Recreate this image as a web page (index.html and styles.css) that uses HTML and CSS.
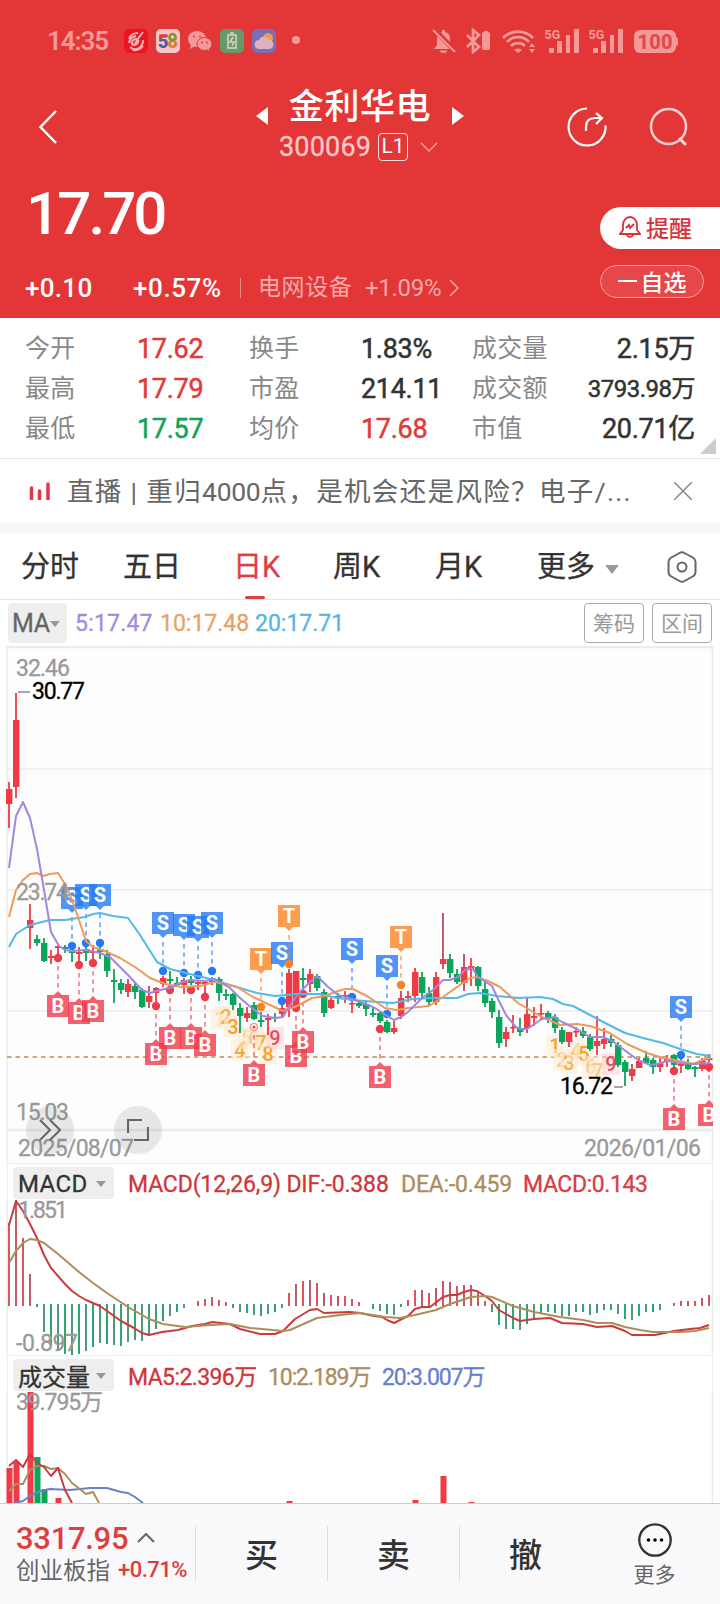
FILE: index.html
```
<!DOCTYPE html>
<html lang="zh-CN">
<head>
    <meta charset="UTF-8">
    <meta name="viewport" content="width=device-width, initial-scale=1.0">
    <title>金利华电 300069</title>
    <link rel="stylesheet" href="styles.css">
</head>
<body>
    <header>
        <div class="status">
            <span class="clock">14:35</span>
            <svg class="apps" width="182" height="26" viewBox="0 0 182 26">
                <rect x="1" y="1" width="24" height="24" rx="5" fill="#ee1320"/>
                <g fill="none" stroke="#f5b0b0" stroke-width="2">
                    <ellipse cx="12" cy="14" rx="3.500" ry="2.500" transform="rotate(-40 12 14)"/>
                    <path d="M20 4l-6 8q-1 4-4 5M15 5Q8 5 6 11M13 8q-6 1-7 7M7 19q4 4 9 1 4-2 4-8M10 22q6 1 10-4"/>
                </g>
                <rect x="33" y="1" width="24" height="24" rx="5" fill="#f7c5c6"/>
                <text class="n58" x="35" y="19.500"><tspan fill="#48609c">5</tspan><tspan fill="#dc7a32">8</tspan></text>
                <path d="M37.500 7.500h7M37.500 6.500v5" stroke="#e23a42" stroke-width="2.500"/>
                <circle cx="49.500" cy="9" r="3" fill="#f7c5c6" stroke="#7a9a30" stroke-width="2.500"/>
                <g fill="#f3999a">
                    <ellipse cx="74" cy="11" rx="9" ry="8"/>
                    <path d="M68 16l-1 5 5-3z"/>
                    <ellipse cx="81.500" cy="16" rx="7.500" ry="6.500" stroke="#e33637"/>
                    <path d="M84 20l2 3v-5z"/>
                </g>
                <g fill="#e33637">
                    <circle cx="71" cy="8.500" r="1"/><circle cx="77" cy="8.500" r="1"/>
                    <circle cx="79" cy="14.500" r="1"/><circle cx="84" cy="14.500" r="1"/>
                </g>
                <rect x="97" y="1" width="24" height="24" rx="5" fill="#659b68"/>
                <path d="M105 7h8v13h-8zM107 5h4M110 9l-3 5h4l-2 4" fill="none" stroke="#e0d3c4" stroke-width="1.500"/>
                <rect x="129" y="1" width="24" height="24" rx="5" fill="#786fb5"/>
                <circle cx="145" cy="10" r="5" fill="#ee9c48"/>
                <path d="M136 21a4.500 4.500 0 0 1 0-9 5.500 5.500 0 0 1 10 0 4.500 4.500 0 0 1 0 9z" fill="#dfb0bd"/>
                <circle cx="173" cy="12" r="4" fill="#f3999a"/>
            </svg>
            <svg class="signals" width="246" height="26" viewBox="432 28 246 26">
                <g fill="#f3999a">
                    <path d="M434 49h19l-3-4v-6a7 7 0 0 0-5-7v-2h-3v2a7 7 0 0 0-5 7v6zM440 50.500h7a3.500 2.500 0 0 1-7 0z"/>
                    <path d="M434 29l22 23" stroke="#e33637" stroke-width="5"/>
                    <path d="M433 30l22 22" stroke="#f3999a" stroke-width="2"/>
                    <rect x="482" y="32" width="8" height="18" rx="2"/><rect x="484" y="31" width="4" height="3"/>
                    <path d="M518 53l-4-3a6 6 0 0 1 8 0zM529 47h6l-3-4zM529 49h6l-3 4z"/>
                    <path d="M549 48h5v5h-5zM557 41h5v12h-5zM566 35h4v18h-4zM574 29h5v24h-5zM593 48h5v5h-5zM601 41h5v12h-5zM610 35h4v18h-4zM618 29h5v24h-5z"/>
                    <rect x="634" y="30" width="42" height="23" rx="6"/><path d="M676 37q2 0 2 3v3q0 3-2 3z"/>
                </g>
                <path d="M467 35l12 12-6 5V30l6 5-12 12M503 38a21 21 0 0 1 30 0M507 42a15 15 0 0 1 22 0M511 46a10 10 0 0 1 14 0" fill="none" stroke="#f3999a" stroke-width="2.700"/>
                <text class="net" x="544.500" y="38.500">5G</text>
                <text class="net" x="588.500" y="38.500">5G</text>
                <text class="battery" x="637.500" y="48.500" textLength="35">100</text>
            </svg>
        </div>
        <nav>
            <svg class="back" width="24" height="36" viewBox="0 0 24 36"><path d="M20 2L4.500 18 20 34"/></svg>
            <div class="name">
                <div class="title">
                    <svg width="12" height="18"><path d="M12 0v18L0 9z" fill="#fff"/></svg>
                    <h1>金利华电</h1>
                    <svg width="12" height="18"><path d="M0 0v18l12-9z" fill="#fff"/></svg>
                </div>
                <div class="code">
                    <span>300069</span><b>L1</b>
                    <svg width="18" height="10"><path d="M1 1l8 8 8-8" fill="none" stroke="#f3999a" stroke-width="1.500"/></svg>
                </div>
            </div>
            <svg class="tools" width="124" height="42" viewBox="566 106 124 42">
                <path d="M587 108.500a18.500 18.500 0 1 0 18.500 17" fill="none" stroke="#fff" stroke-width="2.200"/>
                <path d="M586 131v-4q0-9 9-9h7M596 113l6 5-6 6" fill="none" stroke="#fff" stroke-width="2.200"/>
                <circle cx="668.500" cy="126.500" r="17.500" fill="none" stroke="#f9d0d0" stroke-width="2.500"/>
                <path d="M679 138l7 7" stroke="#f9d0d0" stroke-width="3"/>
            </svg>
        </nav>
        <div class="price">
            <strong>17.70</strong>
            <span class="remind">
                <svg width="22" height="24" viewBox="0 0 22 24" fill="none" stroke="#d8333b" stroke-width="1.800"><path d="M1 19h20l-3-4V10a7 8 0 0 0-14 0v5zM7 19q4 6 8 0M7 13l3-3 1 3 4-4"/></svg>
                提醒
            </span>
        </div>
        <div class="change">
            <span class="diff">+0.10</span>
            <span class="pct">+0.57%</span>
            <span class="sector">电网设备</span>
            <span class="sector-pct">+1.09%</span>
            <svg width="10" height="18"><path d="M1 1l8 8-8 8" fill="none" stroke="#f3aaaa" stroke-width="1.500"/></svg>
            <span class="fav"><i></i>自选</span>
        </div>
    </header>

    <section class="quote">
        <span>今开</span><b class="red">17.62</b><span>换手</span><b>1.83%</b><span>成交量</span><b class="end">2.15万</b>
        <span>最高</span><b class="red">17.79</b><span>市盈</span><b>214.11</b><span>成交额</span><b class="end small">3793.98万</b>
        <span>最低</span><b class="green">17.57</b><span>均价</span><b class="red">17.68</b><span>市值</span><b class="end">20.71亿</b>
    </section>

    <section class="notice">
        <svg width="22" height="18"><path d="M2.500 17V6M10.500 17V9M19 17V2" stroke="#e13a42" stroke-width="3.500" stroke-linecap="round"/></svg>
        <p>直播 | 重归<em>4000</em>点，是机会还是风险？电子/...</p>
        <svg width="18" height="18"><path d="M0 0l18 18M18 0L0 18" stroke="#888" stroke-width="1.500"/></svg>
    </section>

    <div class="tabs">
        <span>分时</span>
        <span>五日</span>
        <span class="active">日K</span>
        <span>周K</span>
        <span>月K</span>
        <span>更多<i class="arrow"></i></span>
        <svg width="30" height="32" viewBox="0 0 30 32" fill="none" stroke="#666" stroke-width="2"><path d="M12.500 2q2.500-1.500 5 0l9 5q2 1.500 2 4v10q0 2.500-2 4l-9 5q-2.500 1.500-5 0l-9-5q-2-1.500-2-4V11q0-2.500 2-4z"/><circle cx="15" cy="16" r="4.500"/></svg>
    </div>

    <div class="ma-row">
        <span class="select">MA<i class="arrow"></i></span>
        <span class="ma5">5:17.47</span>
        <span class="ma10">10:17.48</span>
        <span class="ma20">20:17.71</span>
        <button>筹码</button>
        <button>区间</button>
    </div>

    <div class="kline">
        <svg id="kline" width="720" height="517" viewBox="0 646 720 517"></svg>
        <span class="round next"><svg width="22" height="22"><path d="M1 1l10 10L1 21M11 1l10 10-10 10" fill="none" stroke="#666" stroke-width="2"/></svg></span>
        <span class="round expand"><svg width="22" height="22"><path d="M1 14V1h14M7 21h14V8" fill="none" stroke="#666" stroke-width="2.200"/></svg></span>
    </div>

    <div class="panel-head">
        <span class="select">MACD<i class="arrow"></i></span>
        <span class="m-red">MACD(12,26,9) DIF:-0.388</span>
        <span class="m-gold">DEA:-0.459</span>
        <span class="m-red2">MACD:0.143</span>
    </div>
    <svg id="macd" width="720" height="155" viewBox="0 1200 720 155"></svg>

    <div class="panel-head vol">
        <span class="select">成交量<i class="arrow"></i></span>
        <span class="m-red">MA5:2.396万</span>
        <span class="m-gold">10:2.189万</span>
        <span class="m-blue">20:3.007万</span>
    </div>
    <svg id="volume" width="720" height="111" viewBox="0 1392 720 111"></svg>

    <footer>
        <div class="index">
            <div><strong>3317.95</strong><svg width="18" height="10"><path d="M1 9l8-8 8 8" fill="none" stroke="#666" stroke-width="2"/></svg></div>
            <div class="index-name">创业板指 <b>+0.71%</b></div>
        </div>
        <span class="action">买</span>
        <span class="action">卖</span>
        <span class="action">撤</span>
        <span class="more">
            <svg width="34" height="34"><circle cx="17" cy="17" r="15.700" fill="none" stroke="#333" stroke-width="2.300"/><circle cx="10.500" cy="17" r="1.800"/><circle cx="17" cy="17" r="1.800"/><circle cx="23.500" cy="17" r="1.800"/></svg>
            更多
        </span>
    </footer>
    <script src="chart.js"></script>
</body>
</html>
```
FILE: styles.css
```
* {
    box-sizing: border-box;
}
body {
    margin: 0;
    width: 720px;
    height: 1604px;
    overflow: hidden;
    background: #fff;
    color: #333;
    font-family: Roboto, "Noto Sans CJK SC", sans-serif;
}
svg {
    display: block;
    flex: none;
}
header {
    height: 318px;
    background: #e33637;
    color: #fff;
}
.status {
    display: flex;
    align-items: center;
    height: 82px;
    padding-left: 47px;
}
.clock {
    width: 76px;
    font-size: 26px;
    font-weight: 600;
    letter-spacing: -1.1px;
    color: #f3999a;
}
.signals {
    margin-left: 127px;
}
.n58 {
    font-size: 18px;
    font-weight: 900;
    letter-spacing: -1px;
}
.net {
    font-size: 12.5px;
    font-weight: 700;
    fill: #f3999a;
}
.battery {
    font-size: 20px;
    font-weight: 800;
    fill: #e04a4d;
}
nav {
    display: flex;
    align-items: center;
    height: 90px;
    padding: 0 30px 0 36px;
}
.back path {
    fill: none;
    stroke: #fff;
    stroke-width: 2.5;
}
.name {
    margin-left: 196px;
    width: 208px;
    margin-top: -2px;
}
.title {
    display: flex;
    align-items: center;
    justify-content: space-between;
    height: 42px;
}
.title svg {
    margin-top: 16px;
}
h1 {
    margin: 0;
    font-size: 35px;
    line-height: 42px;
    font-weight: 500;
    letter-spacing: 0.6px;
}
.code {
    display: flex;
    align-items: center;
    height: 36px;
    padding-left: 23px;
    font-size: 27px;
    color: #f9c8c8;
}
.code span {
    width: 99px;
    letter-spacing: 0.2px;
    -webkit-text-stroke: 0.3px;
}
.code b {
    width: 30px;
    height: 28px;
    margin-right: 12px;
    border: 1.5px solid #fbdede;
    border-radius: 4px;
    font-size: 21px;
    line-height: 25px;
    font-weight: 400;
    text-align: center;
    color: #fff;
}
.tools {
    margin-left: 102px;
}
.price {
    display: flex;
    align-items: center;
    justify-content: space-between;
    height: 86px;
    padding-left: 26px;
}
.price strong {
    margin-top: -4px;
    font-size: 60px;
    font-weight: 500;
    letter-spacing: -2.9px;
}
.remind {
    display: flex;
    align-items: center;
    gap: 5px;
    width: 120px;
    height: 42px;
    margin-top: 26px;
    padding: 0 0 2px 19px;
    border-radius: 21px 0 0 21px;
    background: #fff;
    color: #d8333b;
    font-size: 23px;
    font-weight: 500;
}
.change {
    display: flex;
    align-items: center;
    height: 60px;
    padding: 0 16px 0 25px;
    font-size: 26px;
}
.diff {
    width: 108px;
    font-weight: 500;
    letter-spacing: 0.3px;
}
.pct {
    width: 107px;
    font-weight: 500;
    letter-spacing: 0.6px;
}
.sector {
    width: 125px;
    padding-left: 17px;
    border-left: 1px solid #ee8585;
    font-size: 23px;
    line-height: 20px;
    letter-spacing: 0.6px;
    color: #f3aaaa;
}
.sector-pct {
    width: 84px;
    font-size: 24px;
    letter-spacing: -0.3px;
    color: #f3aaaa;
}
.fav {
    display: flex;
    align-items: center;
    justify-content: center;
    gap: 4px;
    width: 104px;
    height: 33px;
    margin: -13px 0 0 auto;
    padding-bottom: 2px;
    border: 1px solid #f2a0a0;
    border-radius: 17px;
    background: #e64748;
    font-size: 23px;
    font-weight: 500;
}
.fav i {
    width: 19px;
    height: 2px;
    background: #fff;
}
.quote {
    display: grid;
    grid-template-columns: 112px 112px 112px 111px 110px 113px;
    grid-template-rows: repeat(3, 40px);
    align-items: center;
    height: 141px;
    padding: 11px 0 0 25px;
    border-bottom: 1px solid #e5e5e5;
    position: relative;
}
.quote::after {
    content: "";
    position: absolute;
    right: 4px;
    bottom: 4px;
    border: 8px solid #ccc;
    border-left-color: transparent;
    border-top-color: transparent;
}
.quote span {
    font-size: 25px;
    line-height: 40px;
    letter-spacing: 0.3px;
    color: #888;
}
.quote b {
    font-size: 27px;
    line-height: 40px;
    font-weight: 400;
    letter-spacing: -0.3px;
    white-space: nowrap;
    -webkit-text-stroke: 0.5px;
}
.quote .end {
    text-align: right;
}
.quote .small {
    font-size: 24px;
    letter-spacing: -0.5px;
}
.quote .red {
    color: #df3b38;
}
.quote .green {
    color: #12a35a;
}
.notice {
    display: flex;
    align-items: center;
    height: 64px;
    padding-left: 29px;
}
.notice p {
    width: 607px;
    margin: -4px 0 0 16px;
    font-size: 26.5px;
    letter-spacing: 1.35px;
    white-space: nowrap;
    color: #666;
}
.notice em {
    font-style: normal;
    letter-spacing: -0.3px;
}
.tabs {
    display: flex;
    align-items: center;
    height: 77px;
    padding: 2px 0 0 21px;
    border-top: 10px solid #f7f7f7;
    border-bottom: 1px solid #e5e5e5;
    font-size: 29px;
}
.tabs span {
    position: relative;
    width: 102px;
    line-height: 60px;
    white-space: nowrap;
    -webkit-text-stroke: 0.3px;
}
.tabs span:nth-child(2) {
    width: 110px;
}
.tabs span:nth-child(3) {
    width: 100px;
}
.tabs span:nth-child(6) {
    width: 130px;
}
.tabs .active {
    color: #dd3f48;
}
.tabs .active::after {
    content: "";
    position: absolute;
    left: 12px;
    bottom: -2px;
    width: 20px;
    height: 3px;
    border-radius: 2px;
    background: #d8404a;
}
.arrow {
    display: inline-block;
    border: 5px solid transparent;
    border-top: 6px solid #999;
    border-bottom: 0;
    vertical-align: middle;
}
.tabs .arrow {
    margin-left: 10px;
    border-width: 9px 7px 0;
}
.ma-row {
    display: flex;
    align-items: center;
    height: 46px;
    padding: 0 8px;
    font-size: 23px;
}
.ma-row span {
    padding-top: 1px;
    -webkit-text-stroke: 0.3px;
}
.select {
    background: #eee;
    border-radius: 4px;
    color: #333;
}
.ma-row .select {
    width: 59px;
    height: 40px;
    margin-right: 8px;
    padding-left: 4px;
    font-size: 25px;
    line-height: 39px;
    letter-spacing: -0.4px;
    white-space: nowrap;
    color: #666;
}
.ma-row .arrow {
    margin-top: -3px;
}
.ma5 {
    width: 85px;
    letter-spacing: 0.2px;
    color: #a38bdc;
}
.ma10 {
    width: 95px;
    color: #eaa066;
}
.ma20 {
    flex: 1;
    color: #54b6e4;
}
.ma-row button {
    width: 60px;
    height: 40px;
    margin-left: 8px;
    padding: 0 0 3px;
    border: 1px solid #aaa;
    border-radius: 4px;
    background: #fff;
    color: #999;
    font: 21px Roboto, "Noto Sans CJK SC", sans-serif;
}
.kline {
    position: relative;
    height: 517px;
}
.round {
    position: absolute;
    top: 460px;
    display: flex;
    align-items: center;
    justify-content: center;
    width: 48px;
    height: 48px;
    border-radius: 50%;
    background: rgba(120, 120, 120, 0.16);
}
.next {
    left: 26px;
}
.expand {
    left: 114px;
}
.panel-head {
    display: flex;
    align-items: center;
    height: 37px;
    margin: 0 7px;
    padding: 2px 0 0 5px;
    border: 1px solid #eee;
    border-bottom: 0;
    font-size: 23px;
    white-space: nowrap;
}
.panel-head span {
    padding-top: 2px;
    -webkit-text-stroke: 0.3px;
}
.panel-head .select {
    display: flex;
    align-items: center;
    justify-content: space-between;
    width: 101px;
    height: 32px;
    margin-right: 14px;
    padding: 1px 8px 0 5px;
    font-size: 24px;
    letter-spacing: 0.4px;
}
.m-red, .m-red2 {
    color: #cf3539;
}
.m-red {
    width: 273px;
    letter-spacing: -0.15px;
}
.m-red2 {
    letter-spacing: -0.4px;
    color: #dc3a44;
}
.m-gold {
    width: 122px;
    letter-spacing: -0.2px;
    color: #ab8d5a;
}
.m-blue {
    color: #6580cc;
}
.vol .select {
    letter-spacing: 0;
}
.vol span {
    padding-top: 0;
}
.vol .m-red {
    width: 140px;
    letter-spacing: -0.6px;
}
.vol .m-gold {
    width: 114px;
}
.vol .m-gold, .vol .m-blue {
    letter-spacing: -1.1px;
}
footer {
    position: relative;
    display: flex;
    height: 101px;
    border-top: 1px solid #ccc;
    background: #f9f9fc;
}
.index {
    width: 195px;
    padding: 16px 0 0 16px;
    white-space: nowrap;
}
.index div {
    display: flex;
    align-items: center;
    height: 36px;
    gap: 9px;
}
.index strong {
    font-size: 31px;
    font-weight: 500;
    letter-spacing: -0.3px;
    color: #dd3f3d;
}
.index .index-name {
    gap: 8px;
    height: 26px;
    font-size: 23.5px;
    color: #666;
}
.index-name b {
    font-size: 22px;
    font-weight: 500;
    letter-spacing: -0.5px;
    color: #df3b38;
}
.action {
    width: 132px;
    height: 56px;
    margin-top: 22px;
    border-left: 1px solid #ddd;
    font-size: 33px;
    line-height: 60px;
    font-weight: 500;
    text-align: center;
}
.more {
    display: flex;
    flex-direction: column;
    align-items: center;
    flex: 1;
    margin: 19px 2px 0 0;
    font-size: 21px;
    line-height: 36px;
    color: #666;
}
#kline text, #macd text, #volume text {
    font-family: Roboto, "Noto Sans CJK SC", sans-serif;
}
#macd, #volume {
    overflow: visible;
}
```
FILE: chart.js
```
const NS = 'http://www.w3.org/2000/svg';
const RED = '#ef3b46', GREEN = '#09a65b';
const BARS = 101;
const x = i => 9 + i * 7;

function add(svg, name, attrs, text) {
    const el = document.createElementNS(NS, name);
    for (const k in attrs) el.setAttribute(k, attrs[k]);
    if (text) el.textContent = text;
    svg.appendChild(el);
    return el;
}
function line(svg, x1, y1, x2, y2, stroke, w, dash) {
    add(svg, 'line', { x1, y1, x2, y2, stroke, 'stroke-width': w, 'stroke-dasharray': dash || 'none' });
}
function curve(svg, points, stroke) {
    add(svg, 'polyline', { points, stroke, fill: 'none', 'stroke-width': 2, 'stroke-linejoin': 'round' });
}
function label(svg, lx, y, text, width, fill, size) {
    add(svg, 'text', { x: lx, y, fill, 'font-size': size || 23, textLength: width, stroke: fill, 'stroke-width': 0.3 }, text);
}

// candles: index, high, low, body top, body bottom, up
const candles = `0 782 828 789 804 1|1 693 798 720 787 1|3 904 949 920 928 1|4 935 946 939 943 0|5 938 962 943 961 0
6 950 964 956 958 1|7 945 960 946 948 1|8 945 953 947 949 0|9 948 962 951 953 0|10 947 963 952 954 1
11 946 961 949 953 0|12 945 960 951 953 1|13 945 959 949 952 0|14 950 977 954 971 0|15 969 1003 980 982 0
16 979 994 983 990 0|17 979 997 984 992 1|18 983 999 986 992 0|19 988 1008 990 1007 0|20 986 1008 996 1002 1
21 987 1005 988 993 1|22 976 987 978 984 1|23 971 986 979 981 0|24 977 987 983 985 0|25 978 994 980 985 1
26 976 985 981 983 0|27 980 990 982 984 1|28 982 994 982 984 1|29 977 985 980 982 1|30 977 1001 979 993 0
31 989 1000 994 996 0|32 993 1010 994 1005 0|33 1003 1033 1008 1016 0|34 1007 1022 1013 1018 1|35 1002 1020 1005 1019 0
36 1012 1027 1020 1022 0|37 1014 1035 1018 1020 1|38 1013 1022 1017 1018 0|39 1003 1018 1008 1014 1|40 969 1017 973 1007 1
41 971 1010 971 1007 1|42 968 995 978 980 0|43 969 992 974 984 1|44 974 991 976 988 0|45 989 1017 992 1013 0
46 998 1009 1000 1008 1|47 993 1004 996 998 0|48 991 1003 995 997 1|49 995 1013 1003 1004 1|50 1001 1008 1003 1006 0
51 1002 1016 1004 1009 0|52 1007 1017 1013 1015 0|53 1012 1023 1013 1021 0|54 1020 1033 1022 1032 0|55 1021 1034 1028 1032 1
56 991 1019 998 1016 1|57 991 1002 996 998 1|58 968 1002 972 996 1|59 972 998 977 993 0|60 987 1005 993 1002 0
61 972 1005 977 1002 1|62 913 969 959 964 1|63 954 978 959 973 0|64 969 984 974 982 0|65 954 991 967 983 1
66 958 986 966 970 1|67 966 991 967 986 0|68 982 1007 989 1003 0|69 998 1018 1001 1012 0|70 1010 1048 1017 1043 0
71 1027 1047 1032 1039 1|72 1015 1033 1027 1028 1|73 1018 1036 1028 1032 0|74 998 1033 1014 1028 1|75 1007 1026 1016 1018 1
76 1004 1020 1013 1014 1|77 1011 1023 1013 1019 0|78 1014 1033 1017 1028 0|79 1027 1044 1030 1042 0|80 1032 1047 1032 1042 1
81 1027 1037 1031 1032 1|82 1027 1038 1031 1036 0|83 1034 1051 1037 1049 0|84 1016 1055 1041 1046 1|85 1028 1049 1039 1044 1
86 1035 1047 1039 1043 0|87 1042 1067 1045 1065 0|88 1060 1086 1062 1072 0|89 1064 1081 1069 1076 1|90 1058 1068 1061 1068 1
91 1051 1064 1058 1063 0|92 1058 1074 1060 1067 0|93 1057 1072 1063 1067 1|94 1055 1067 1059 1061 1|95 1054 1067 1055 1065 0
96 1058 1073 1064 1066 1|97 1059 1070 1064 1069 0|98 1066 1077 1067 1069 0|99 1058 1071 1060 1069 1|100 1054 1072 1058 1060 1`;

const ma5 = '9,868 16,816 23,802 30,818 37,849 44,890 51,932 59,946 65,950 72,951 86,950 100,953 110,957 128,975 142,990 150,993 160,990 170,988 182,982 190,980 205,981 215,979 230,988 240,998 253,1009 263,1016 275,1018 283,1017 290,1005 300,992 310,982 317,976 327,986 338,995 352,999 363,1003 375,1008 387,1016 394,1020 401,1017 408,1012 422,998 433,990 443,980 450,980 458,977 465,970 472,968 478,977 492,986 498,999 506,1015 515,1026 520,1029 527,1029 542,1019 554,1017 562,1022 577,1029 590,1037 603,1037 612,1041 623,1049 638,1060 650,1065 657,1064 667,1061 680,1063 695,1064 710,1063';
const ma10 = '9,917 16,890 23,880 30,874 37,873 43,876 50,874 58,873 65,884 72,900 79,920 86,941 93,947 107,952 120,958 135,967 150,978 165,984 182,987 200,986 215,982 237,987 253,997 270,1005 283,1011 297,1006 312,998 325,996 335,992 345,989 353,989 367,996 385,1008 397,1010 408,1008 429,1006 443,997 457,987 470,978 477,977 488,981 500,987 518,1003 540,1016 560,1025 577,1024 590,1026 610,1033 627,1044 647,1053 663,1058 680,1061 693,1064 705,1059 711,1058';
const ma20 = '9,947 16,934 30,925 50,920 65,920 85,917 93,914 100,913 113,916 128,918 140,935 157,962 170,969 190,974 210,979 240,988 257,993 275,996 297,994 320,994 337,998 353,1000 377,1002 393,1003 413,999 433,998 457,998 468,994 480,993 497,996 518,998 540,997 553,999 563,1004 573,1006 590,1015 607,1024 625,1033 643,1038 663,1043 680,1049 697,1054 711,1056';

// trade flags: type, bar index, flag top, dot y
const flags = [
    ['S', 9, 887, 946], ['S', 11, 884, 943], ['S', 13, 884, 943],
    ['S', 22, 912, 971], ['S', 25, 914, 973], ['S', 27, 916, 975], ['S', 29, 912, 971],
    ['B', 7, 995, 958], ['B', 10, 1002, 965], ['B', 12, 1000, 963],
    ['B', 21, 1043, 1006], ['B', 23, 1027, 990], ['B', 26, 1027, 990], ['B', 28, 1034, 997],
    ['T', 36, 948, 1007], ['S', 39, 942, 1001], ['T', 40, 905, 964],
    ['B', 41, 1045, 1008], ['B', 42, 1031, 994],
    ['S', 49, 938, 997], ['S', 54, 955, 1014], ['T', 56, 926, 985], ['B', 53, 1066, 1029],
    ['S', 96, 996, 1055], ['B', 95, 1108, 1071], ['B', 100, 1104, 1067], ['B', 35, 1064, 1027]
];
const flagColor = { S: '#2479f5', B: '#ef3b4a', T: '#fb8325' };

// nine-turn counts: text, x, centre y, opacity
const counts = [
    [1, 220, 1019, 0.4], [2, 226, 1017, 0.8], [3, 233, 1027, 1], [4, 240, 1050, 0.9], [5, 247, 1038, 0.4],
    [6, 254, 1038, 0.4], [7, 261, 1043, 0.9], [8, 268, 1054, 1], [9, 275, 1038, 1],
    [1, 555, 1046, 1], [2, 562, 1060, 0.5], [3, 569, 1063, 0.8], [4, 576, 1051, 0.5], [5, 584, 1054, 1],
    [6, 591, 1067, 0.5], [7, 598, 1071, 0.5], [9, 611, 1064, 1]
];

const k = document.getElementById('kline');
add(k, 'rect', { x: 8, y: 648, width: 704, height: 515, fill: '#fdfdfd' });
[769, 890, 1011].forEach(y => line(k, 7, y, 712, y, '#f1f1f1', 2));
line(k, 7, 647, 712, 647, '#ebebeb', 2.5);
line(k, 7, 1130, 712, 1130, '#ebebeb', 2.5);
line(k, 7, 646, 7, 1163, '#ebebeb', 1.5);
line(k, 712.5, 646, 712.5, 1163, '#ebebeb', 1.5);
line(k, 7, 1057, 712, 1057, '#d0a878', 2, '4.500 4');

counts.forEach(([n, cx, cy, o]) => {
    const nine = n === 9;
    add(k, 'rect', { x: cx - 9, y: cy - 11, width: 18, height: 22, rx: 2, fill: nine ? '#ffcfd3' : '#fdebd3', opacity: 0.55 });
    add(k, 'text', { x: cx, y: cy + 7, 'text-anchor': 'middle', 'font-size': 20, 'font-weight': 500, fill: nine ? '#e54b58' : '#f5a12b', opacity: o }, n);
});

candles.split(/[|\n]/).forEach(row => {
    const [i, high, low, top, bottom, up] = row.split(' ').map(Number);
    const color = up ? RED : GREEN;
    line(k, x(i), high, x(i), low, up && i % 3 === 2 ? '#b64c5c' : color, 1.8);
    add(k, 'rect', { x: x(i) - 3, y: top, width: 6.4, height: Math.max(1.5, bottom - top), fill: color });
});

flags.forEach(([type, i, top, dot]) => {
    const cx = x(i), below = type === 'B', color = flagColor[type];
    const g = add(k, 'g', cx > 700 ? { 'clip-path': 'inset(0 7px 0 0)' } : {});
    const y1 = below ? dot + 8 : top + 30, y2 = below ? top - 5 : dot - 6;
    line(g, cx, y1, cx, y2, color, 1.8, '4.500 4');
    g.lastChild.setAttribute('opacity', 0.6);
    const tip = below ? `M${cx - 4} ${top}l4-4 4 4z` : `M${cx - 4} ${top + 22}l4 4 4-4z`;
    add(g, 'path', { d: `M${cx - 11} ${top}h22v22h-22z` + tip, fill: color, opacity: 0.8 });
    add(g, 'text', { x: cx, y: top + 18, 'text-anchor': 'middle', 'font-size': 20, 'font-weight': 700, fill: '#fff' }, type);
    if (i !== 35) add(k, 'circle', { cx, cy: dot, r: 4.2, fill: color });
});
add(k, 'circle', { cx: 254, cy: 1027, r: 3.5, fill: 'none', stroke: '#ef8a92', 'stroke-width': 1.2 });
add(k, 'circle', { cx: 254, cy: 1027, r: 1.5, fill: '#ef3b4a' });
curve(k, ma20, '#52b9e8');
curve(k, ma10, '#ec9b5c');
curve(k, ma5, '#a387de');

label(k, 16, 675.5, '32.46', 54, '#999');
line(k, 18, 692, 30, 692, '#888', 1.5);
label(k, 32, 698.5, '30.77', 53, '#000');
label(k, 16, 899.5, '23.74', 53, '#999');
label(k, 16, 1119.5, '15.03', 53, '#999');
label(k, 560, 1093.5, '16.72', 53, '#000');
line(k, 614, 1087, 623, 1087, '#888', 1.5);
label(k, 18, 1155.5, '2025/08/07', 116, '#999');
label(k, 584, 1155.5, '2026/01/06', 117, '#999');

// MACD
const hist = [82, 105, 67, 31, -2, -27, -41, -46, -49, -50, -49, -46, -42, -38, -39, -40, -41, -37, -35, -36, -31, -24, -16, -11, -7, -3, 0,
    4, 6, 8, 5, 3, -3, -7, -8, -10, -11, -9, -7, -3, 12, 21, 24, 25, 22, 12, 10, 9, 9, 6, 3, 0, -4, -6, -9, -10, -2, 5, 15, 15, 12, 17, 24, 23,
    19, 20, 20, 13, 4, -7, -20, -24, -24, -25, -19, -14, -9, -7, -8, -11, -11, -7, -7, -10, -8, -5, -5, -9, -14, -15, -11, -7, -7, -5, 0, 2, 4, 4, 4, 7, 10];
const m = document.getElementById('macd');
line(m, 7, 1200, 7, 1355, '#ebebeb', 1.5);
line(m, 712.5, 1200, 712.5, 1355, '#ebebeb', 1.5);
for (let i = 0; i < BARS; i++) {
    if (!hist[i]) continue;
    const color = hist[i] > 0 ? (i % 2 ? '#b64c58' : '#da414a') : (i % 2 ? '#3c8d70' : '#169e60');
    line(m, x(i), hist[i] > 0 ? 1306 : 1304, x(i), 1305 - hist[i], color, 1.8);
}
curve(m, '9,1225 16,1201 23,1211 30,1224 37,1238 44,1255 51,1268 65,1284 72,1291 79,1296 86,1300 100,1306 121,1321 134,1328 142,1333 149,1335 162,1332 178,1330 192,1326 205,1324 212,1322 230,1324 240,1329 260,1334 275,1334 283,1331 295,1319 310,1310 317,1309 324,1313 350,1312 360,1313 374,1316 382,1317 387,1320 394,1323 408,1316 415,1309 422,1307 430,1307 443,1297 450,1295 457,1295 464,1292 471,1290 477,1291 485,1296 492,1301 499,1310 513,1318 520,1321 534,1319 550,1318 562,1323 583,1324 597,1327 612,1326 625,1331 632,1335 655,1335 674,1331 690,1329 700,1328 709,1325', '#cb3b3e');
curve(m, '9,1263 16,1251 23,1243 30,1239 37,1240 44,1243 58,1254 79,1272 93,1283 107,1293 128,1307 149,1319 163,1324 185,1327 210,1325 230,1324 250,1328 283,1331 290,1330 317,1318 340,1315 360,1313 385,1317 400,1318 415,1315 436,1310 450,1304 471,1297 485,1296 492,1297 513,1306 534,1312 560,1317 583,1320 597,1323 612,1323 625,1327 640,1330 653,1332 680,1332 695,1331 709,1328', '#ab8e5c');
label(m, 18, 1217.5, '1.851', 50, '#999');
label(m, 16, 1351, '-0.897', 62, '#999');

// volume
const v = document.getElementById('volume');
line(v, 7, 1392, 7, 1503, '#ebebeb', 1.5);
line(v, 712.5, 1392, 712.5, 1503, '#ebebeb', 1.5);
[[0, 1468, 1], [1, 1462, 1], [3, 1392, 1], [4, 1457, 0], [5, 1489, 0], [7, 1498, 1], [40, 1501, 1], [58, 1500, 1], [62, 1476, 1], [66, 1502, 1]].forEach(([i, top, up]) => {
    add(v, 'rect', { x: x(i) - 2.5, y: top, width: 6, height: 1503 - top, fill: up ? RED : GREEN });
});
curve(v, '14,1503 23,1501 30,1496 40,1491 50,1489 70,1490 90,1488 107,1488 121,1492 128,1493 135,1497 143,1503', '#6980c8');
curve(v, '9,1491 16,1484 23,1484 30,1470 37,1466 44,1466 51,1469 58,1468 65,1474 72,1483 86,1494 93,1492 99,1503', '#ab8e5c');
curve(v, '9,1466 16,1460 23,1467 30,1454 37,1463 44,1467 51,1476 58,1468 65,1490 72,1503', '#cb3b3e');
label(v, 16, 1409.5, '39.795万', 87, '#999');
```
